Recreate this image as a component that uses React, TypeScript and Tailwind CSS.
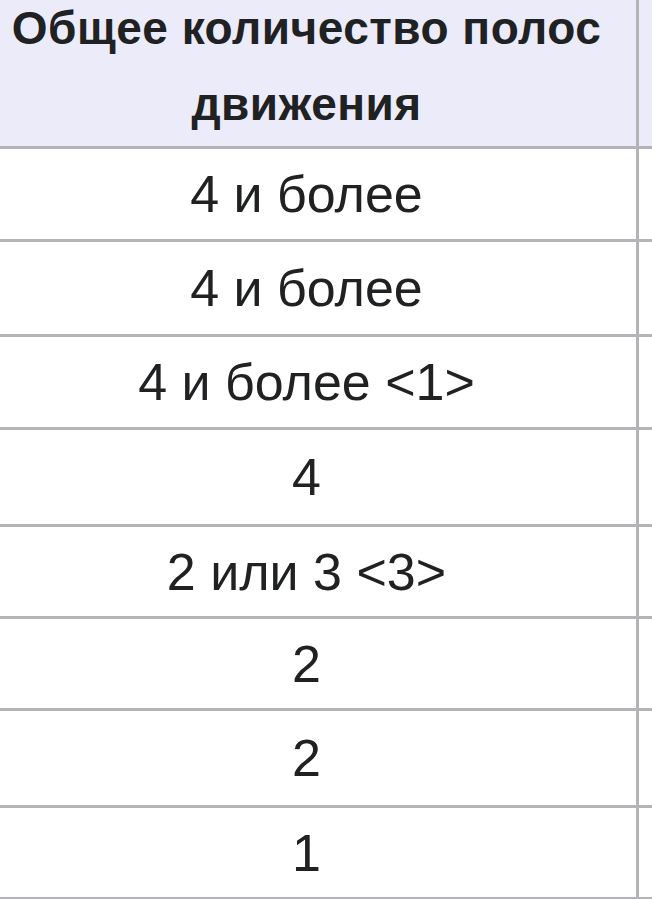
import React from 'react';

interface LaneRow {
  label: string;
  height: string;
}

// row heights follow the grid lines in the picture (border included)
const rows: LaneRow[] = [
  { label: '4 и более', height: 'h-[93px]' },
  { label: '4 и более', height: 'h-[95px]' },
  { label: '4 и более <1>', height: 'h-[93px]' },
  { label: '4', height: 'h-[97px]' },
  { label: '2 или 3 <3>', height: 'h-[92px]' },
  { label: '2', height: 'h-[92px]' },
  { label: '2', height: 'h-[97px]' },
  { label: '1', height: 'h-[92px]' },
];

const App: React.FC = () => {
  return (
    <div className="w-[652px] h-[899px] overflow-hidden bg-white text-[#202122] font-['Liberation_Sans',Arial,sans-serif]">
      {/* Header */}
      <div className="flex h-[149px] border-b-[3px] border-[#b4b4b8]">
        <div className="w-[636px] shrink-0 bg-[#ebebf9] flex flex-col justify-end items-center pr-[23px] pb-[4px] text-[46px] leading-[76px] tracking-[0.5px] font-bold text-center">
          <span>Общее количество полос</span>
          <span>движения</span>
        </div>
        <div className="w-[3px] shrink-0 bg-[#b4b4b8]" />
        <div className="flex-1 bg-[#ebebf9]" />
      </div>

      {/* Rows */}
      {rows.map((row, i) => (
        <div key={i} className={`flex ${row.height} border-b-[3px] border-[#b4b4b8]`}>
          <div className="w-[636px] shrink-0 flex items-center justify-center pr-[23px] text-[52px] leading-none">
            {row.label}
          </div>
          <div className="w-[3px] shrink-0 bg-[#b4b4b8]" />
          <div className="flex-1 bg-white" />
        </div>
      ))}
    </div>
  );
};

export default App;
